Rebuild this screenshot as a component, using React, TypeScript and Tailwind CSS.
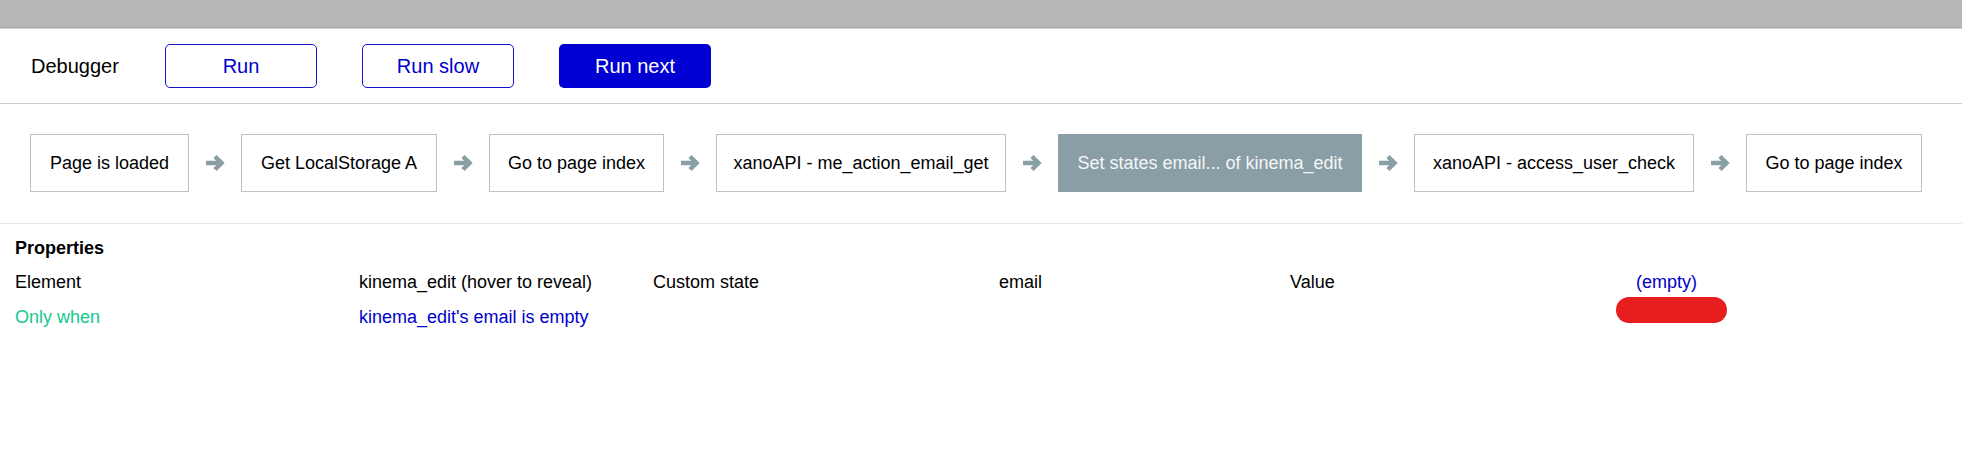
const steps = [
  { label: "Page is loaded", width: "w-[159px]" },
  { label: "Get LocalStorage A", width: "w-[196px]" },
  { label: "Go to page index", width: "w-[175px]" },
  { label: "xanoAPI - me_action_email_get", width: "w-[290px]" },
  { label: "Set states email... of kinema_edit", width: "w-[304px]", active: true },
  { label: "xanoAPI - access_user_check", width: "w-[280px]" },
  { label: "Go to page index", width: "w-[176px]" },
];

function StepArrow() {
  return (
    <svg width="20" height="18" viewBox="0 0 20 18" className="shrink-0">
      <path d="M1 9h14" stroke="#8a9ea5" strokeWidth="4.5" fill="none" />
      <path
        d="M10 2.5l6.5 6.5-6.5 6.5"
        stroke="#8a9ea5"
        strokeWidth="4.5"
        fill="none"
        strokeLinejoin="miter"
      />
    </svg>
  );
}

export default function App() {
  return (
    <div className="h-[452px] w-[1962px] bg-white font-['Liberation_Sans',Arial,sans-serif] text-black">
      <div className="h-[28px] border-b border-[#a4a4a4] bg-[#b8b8b8]" />
      <div className="h-px bg-[#d6d6d6]" />

      <header className="flex h-[75px] items-center gap-[45px] border-b border-[#cccccc] pl-[31px]">
        <span className="w-[89px] whitespace-nowrap text-[20px]">Debugger</span>
        <div className="flex gap-[45px]">
          <button className="h-[44px] w-[152px] rounded-[5px] border border-[#1414d0] text-[20px] text-[#0000cc]">
            Run
          </button>
          <button className="h-[44px] w-[152px] rounded-[5px] border border-[#1414d0] text-[20px] text-[#0000cc]">
            Run slow
          </button>
          <button className="h-[44px] w-[152px] rounded-[5px] bg-[#0000d2] text-[20px] text-white">
            Run next
          </button>
        </div>
      </header>

      <div className="flex items-center gap-[16px] border-b border-[#e8e8e8] pt-[30px] pb-[31px] pl-[30px]">
        {steps.map((step, i) => (
          <div key={i} className="flex items-center gap-[16px]">
            {i > 0 ? <StepArrow /> : null}
            <div
              className={`flex h-[58px] items-center justify-center whitespace-nowrap text-[18px] ${step.width} ${
                step.active
                  ? "bg-[#8a9ea5] text-[#f4f6f7]"
                  : "border border-[#b8c3c7] text-black"
              }`}
            >
              {step.label}
            </div>
          </div>
        ))}
      </div>

      <section className="px-[15px] pt-[12px]">
        <h2 className="text-[18px] font-bold leading-[24px]">Properties</h2>
        <div className="mt-[10px] flex text-[18px] leading-[24px]">
          <div className="w-[344px]">
            <p>Element</p>
            <p className="mt-[11px] text-[#13c98b]">Only when</p>
          </div>
          <div className="w-[294px]">
            <p className="whitespace-nowrap">kinema_edit (hover to reveal)</p>
            <p className="mt-[11px] whitespace-nowrap text-[#0000cc]">kinema_edit's email is empty</p>
          </div>
          <div className="w-[346px]">
            <p>Custom state</p>
          </div>
          <div className="w-[291px]">
            <p>email</p>
          </div>
          <div className="w-[326px]">
            <p>Value</p>
          </div>
          <div className="flex flex-col">
            <p className="pl-[20px] text-[#0000cc]">(empty)</p>
            <div className="mt-[3px] h-[26px] w-[111px] rounded-full bg-[#e81e1e]" />
          </div>
        </div>
      </section>
    </div>
  );
}
